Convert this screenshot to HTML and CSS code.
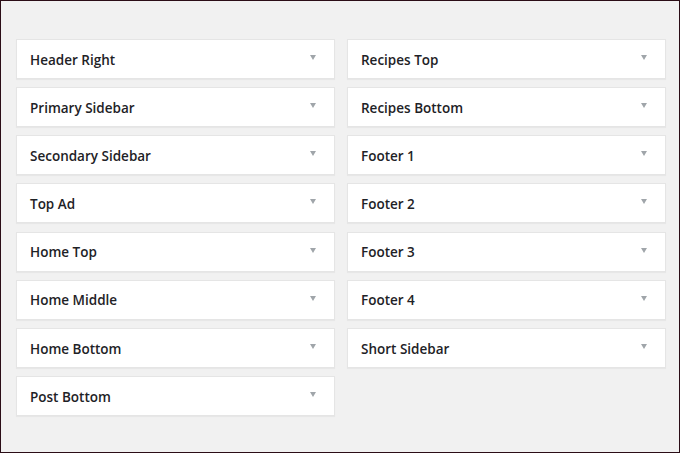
FILE: index.html
```html
<!DOCTYPE html>
<html lang="en">
<head>
<meta charset="utf-8">
<title>Widget Areas</title>
<link rel="stylesheet" href="styles.css">
</head>
<body>
<div class="frame">
  <div class="grid">
    <div class="col">
      <div class="widget"><h3 class="title">Header Right</h3><span class="arrow"></span></div>
      <div class="widget"><h3 class="title">Primary Sidebar</h3><span class="arrow"></span></div>
      <div class="widget"><h3 class="title">Secondary Sidebar</h3><span class="arrow"></span></div>
      <div class="widget"><h3 class="title">Top Ad</h3><span class="arrow"></span></div>
      <div class="widget"><h3 class="title">Home Top</h3><span class="arrow"></span></div>
      <div class="widget"><h3 class="title">Home Middle</h3><span class="arrow"></span></div>
      <div class="widget"><h3 class="title">Home Bottom</h3><span class="arrow"></span></div>
      <div class="widget"><h3 class="title">Post Bottom</h3><span class="arrow"></span></div>
    </div>
    <div class="col">
      <div class="widget"><h3 class="title">Recipes Top</h3><span class="arrow"></span></div>
      <div class="widget"><h3 class="title">Recipes Bottom</h3><span class="arrow"></span></div>
      <div class="widget"><h3 class="title">Footer 1</h3><span class="arrow"></span></div>
      <div class="widget"><h3 class="title">Footer 2</h3><span class="arrow"></span></div>
      <div class="widget"><h3 class="title">Footer 3</h3><span class="arrow"></span></div>
      <div class="widget"><h3 class="title">Footer 4</h3><span class="arrow"></span></div>
      <div class="widget"><h3 class="title">Short Sidebar</h3><span class="arrow"></span></div>
    </div>
  </div>
</div>
</body>
</html>
```
FILE: styles.css
```css
html, body {
  margin: 0;
  padding: 0;
}
body {
  width: 680px;
  height: 453px;
  font-family: "Open Sans", "Liberation Sans", sans-serif;
  background: #f1f1f1;
}
.frame {
  box-sizing: border-box;
  width: 680px;
  height: 453px;
  border: 1px solid #2b0d16;
  background: #f1f1f1;
  padding: 38px 13px 0 15px;
}
.grid {
  display: flex;
  gap: 12px;
}
.col {
  flex: 1;
  display: flex;
  flex-direction: column;
  gap: 8.15px;
}
.widget {
  box-sizing: border-box;
  height: 40px;
  background: #fff;
  border: 1px solid #e5e5e5;
  box-shadow: 0 1px 1px rgba(0, 0, 0, 0.04);
  display: flex;
  align-items: center;
  justify-content: space-between;
  padding: 0 18px 0 13px;
}
.title {
  margin: 0;
  font-size: 13.5px;
  font-weight: 600;
  color: #1e2226;
  line-height: 1;
  padding-top: 3px;
}
.arrow {
  width: 0;
  height: 0;
  border-left: 3.5px solid transparent;
  border-right: 3.5px solid transparent;
  border-top: 5px solid #a0a5aa;
  margin-top: -3px;
}
```
